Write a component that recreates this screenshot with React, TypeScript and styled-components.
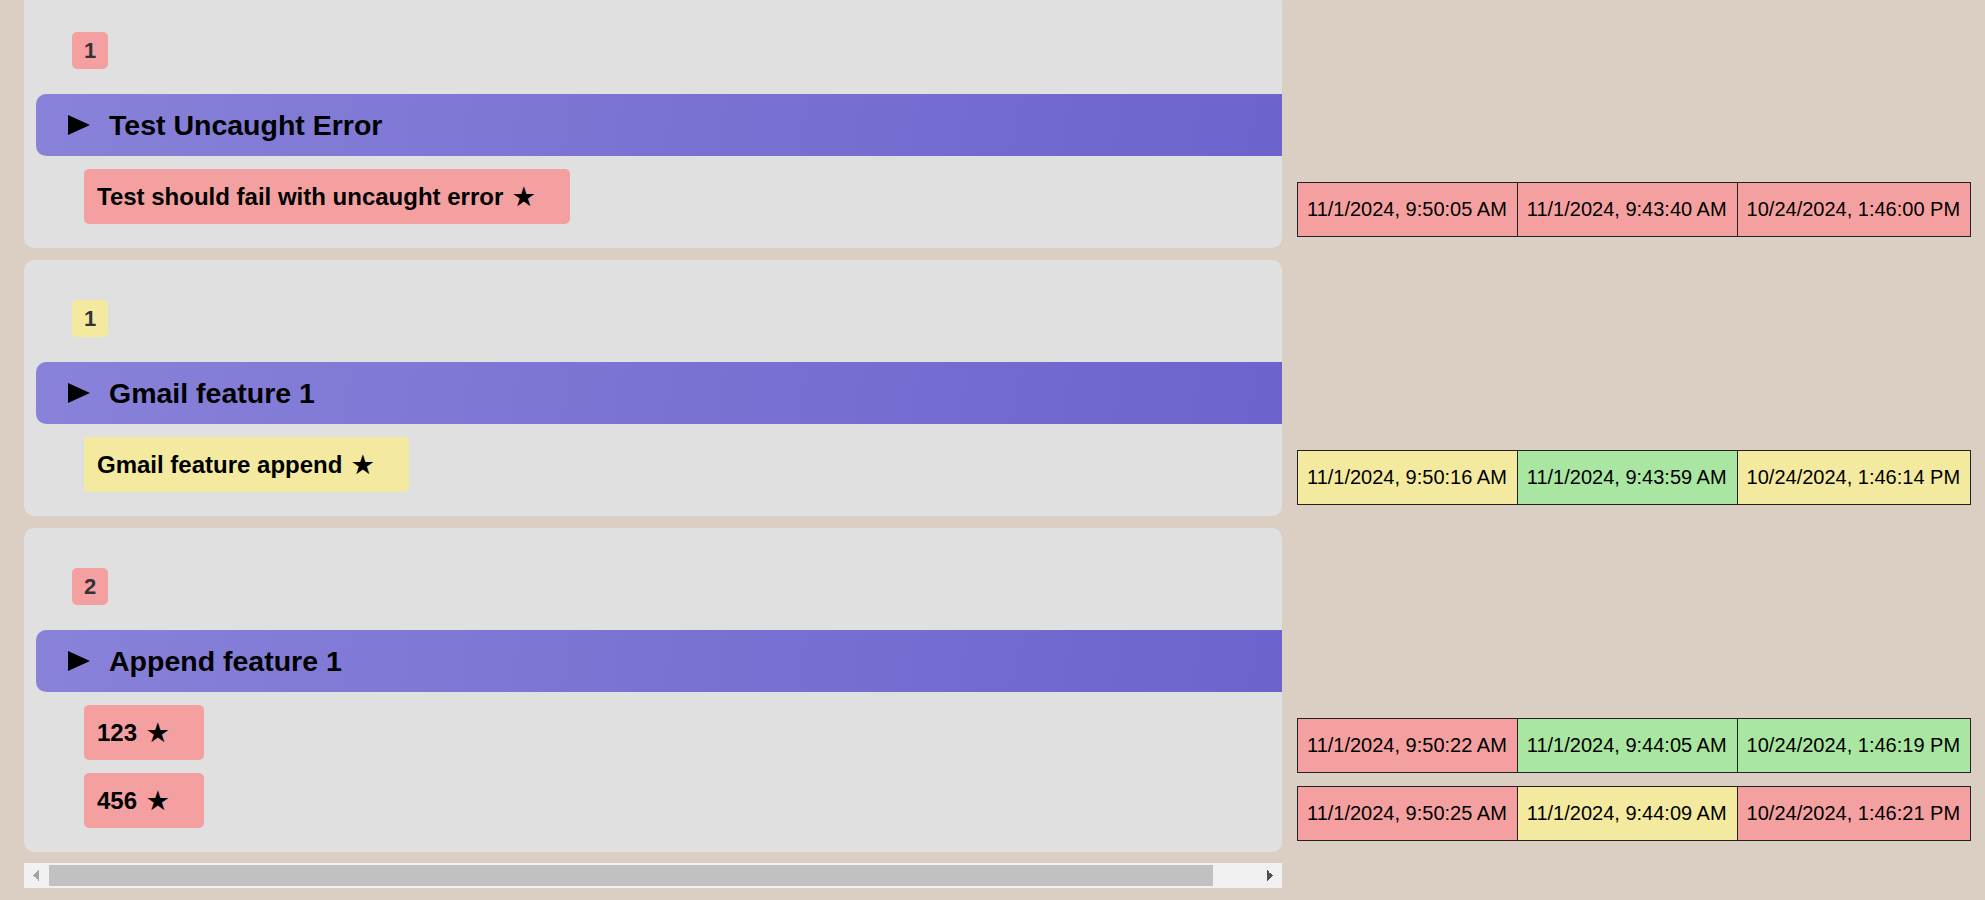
import styled, { createGlobalStyle } from "styled-components";

type Status = "fail" | "warn" | "pass";

const statusColor: Record<Status, string> = {
  fail: "#f4a0a1",
  warn: "#f3ea9f",
  pass: "#a9e6a1",
};

interface Run {
  time: string;
  status: Status;
}

interface TestCase {
  name: string;
  status: Status;
  runs: Run[];
}

interface Feature {
  count: number;
  status: Status;
  title: string;
  tests: TestCase[];
}

const features: Feature[] = [
  {
    count: 1,
    status: "fail",
    title: "Test Uncaught Error",
    tests: [
      {
        name: "Test should fail with uncaught error",
        status: "fail",
        runs: [
          { time: "11/1/2024, 9:50:05 AM", status: "fail" },
          { time: "11/1/2024, 9:43:40 AM", status: "fail" },
          { time: "10/24/2024, 1:46:00 PM", status: "fail" },
        ],
      },
    ],
  },
  {
    count: 1,
    status: "warn",
    title: "Gmail feature 1",
    tests: [
      {
        name: "Gmail feature append",
        status: "warn",
        runs: [
          { time: "11/1/2024, 9:50:16 AM", status: "warn" },
          { time: "11/1/2024, 9:43:59 AM", status: "pass" },
          { time: "10/24/2024, 1:46:14 PM", status: "warn" },
        ],
      },
    ],
  },
  {
    count: 2,
    status: "fail",
    title: "Append feature 1",
    tests: [
      {
        name: "123",
        status: "fail",
        runs: [
          { time: "11/1/2024, 9:50:22 AM", status: "fail" },
          { time: "11/1/2024, 9:44:05 AM", status: "pass" },
          { time: "10/24/2024, 1:46:19 PM", status: "pass" },
        ],
      },
      {
        name: "456",
        status: "fail",
        runs: [
          { time: "11/1/2024, 9:50:25 AM", status: "fail" },
          { time: "11/1/2024, 9:44:09 AM", status: "warn" },
          { time: "10/24/2024, 1:46:21 PM", status: "fail" },
        ],
      },
    ],
  },
];

const GlobalStyle = createGlobalStyle`
  html, body {
    margin: 0;
    padding: 0;
    background: #dbcfc4;
    font-family: "Liberation Sans", Arial, sans-serif;
  }
`;

const Page = styled.div`
  display: flex;
  align-items: flex-start;
  margin-top: -8px;
  padding-left: 24px;
`;

const LeftColumn = styled.div`
  width: 1258px;
  flex-shrink: 0;
  display: flex;
  flex-direction: column;
`;

// the browser scrollbar is not painted in the capture, so the bar below is drawn by hand
const ScrollArea = styled.div`
  overflow-x: auto;
  overflow-y: hidden;
  scrollbar-width: none;
  &::-webkit-scrollbar {
    display: none;
  }
`;

const ScrollTrack = styled.div`
  height: 25px;
  margin-top: 11px;
  background: #f1f1f1;
  display: flex;
  align-items: stretch;
`;

const ScrollButton = styled.div<{ $dir: "left" | "right" }>`
  width: 24px;
  flex-shrink: 0;
  background-repeat: no-repeat;
  background-size: 6px 6px, 6px 6px;
  background-position: 9px 7px, 9px 12px;
  background-image: ${(p) =>
    p.$dir === "left"
      ? "linear-gradient(to bottom right, transparent 50%, #a3a3a3 50%), linear-gradient(to top right, transparent 50%, #a3a3a3 50%)"
      : "linear-gradient(to bottom left, transparent 50%, #505050 50%), linear-gradient(to top left, transparent 50%, #505050 50%)"};
`;

const ScrollThumb = styled.div`
  width: 1164px;
  margin: 2px 0 2px 1px;
  background: #c1c1c1;
`;

const ScrollGap = styled.div`
  flex: 1;
`;

const PanelStack = styled.div`
  display: flex;
  flex-direction: column;
  gap: 12px;
`;

const Panel = styled.section`
  background: #e0e0e0;
  border-radius: 10px;
  padding: 40px 0 24px 12px;
`;

const CountBadge = styled.div<{ $status: Status }>`
  width: 36px;
  height: 37px;
  margin-left: 36px;
  border-radius: 5px;
  background: ${(p) => statusColor[p.$status]};
  color: #333;
  font-size: 22px;
  font-weight: 700;
  display: flex;
  align-items: center;
  justify-content: center;
`;

const FeatureHeader = styled.div`
  margin-top: 25px;
  width: calc(100% + 50px);
  height: 62px;
  border-radius: 10px 0 0 10px;
  background: linear-gradient(100deg, #8882d9 0%, #6b62cc 100%);
  display: flex;
  align-items: center;
  padding-left: 32px;
  box-sizing: border-box;
  gap: 19px;
  color: #000;
  font-size: 28.5px;
  font-weight: 700;
`;

const TestList = styled.div`
  margin-top: 13px;
  margin-left: 48px;
  display: flex;
  flex-direction: column;
  align-items: flex-start;
  gap: 13px;
`;

const TestItem = styled.div<{ $status: Status }>`
  background: ${(p) => statusColor[p.$status]};
  border-radius: 5px;
  padding: 14px 35px 14px 13px;
  font-size: 24px;
  line-height: 27px;
  font-weight: 700;
  color: #000;
`;

const Star = styled.span`
  margin-left: 10px;
`;

const DateColumn = styled.div`
  display: flex;
  flex-direction: column;
  gap: 12px;
  margin-left: 15px;
`;

const DateGroup = styled.div<{ $rows: number }>`
  height: ${(p) => 188 + 68 * p.$rows}px;
  box-sizing: border-box;
  padding-bottom: 11px;
  display: flex;
  flex-direction: column;
  justify-content: flex-end;
  gap: 13px;
`;

const RunTable = styled.table`
  border-collapse: collapse;
`;

const RunCell = styled.td<{ $status: Status }>`
  background: ${(p) => statusColor[p.$status]};
  border: 1px solid #222;
  padding: 15px 10px 15px 9px;
  font-size: 20px;
  line-height: 23px;
  color: #000;
  white-space: nowrap;
`;

function PlayIcon() {
  return (
    <svg width="22" height="20" viewBox="0 0 22 20">
      <polygon points="0,0 22,10 0,20" fill="#000" />
    </svg>
  );
}

export default function App() {
  return (
    <>
      <GlobalStyle />
      <Page>
        <LeftColumn>
          <ScrollArea>
            <PanelStack>
              {features.map((f) => (
                <Panel key={f.title}>
                  <CountBadge $status={f.status}>{f.count}</CountBadge>
                  <FeatureHeader>
                    <PlayIcon />
                    <span>{f.title}</span>
                  </FeatureHeader>
                  <TestList>
                    {f.tests.map((t) => (
                      <TestItem key={t.name} $status={t.status}>
                        {t.name}
                        <Star>★</Star>
                      </TestItem>
                    ))}
                  </TestList>
                </Panel>
              ))}
            </PanelStack>
          </ScrollArea>
          <ScrollTrack>
            <ScrollButton $dir="left" />
            <ScrollThumb />
            <ScrollGap />
            <ScrollButton $dir="right" />
          </ScrollTrack>
        </LeftColumn>
        <DateColumn>
          {features.map((f) => (
            <DateGroup key={f.title} $rows={f.tests.length}>
              {f.tests.map((t) => (
                <RunTable key={t.name}>
                  <tbody>
                    <tr>
                      {t.runs.map((r) => (
                        <RunCell key={r.time} $status={r.status}>
                          {r.time}
                        </RunCell>
                      ))}
                    </tr>
                  </tbody>
                </RunTable>
              ))}
            </DateGroup>
          ))}
        </DateColumn>
      </Page>
    </>
  );
}
